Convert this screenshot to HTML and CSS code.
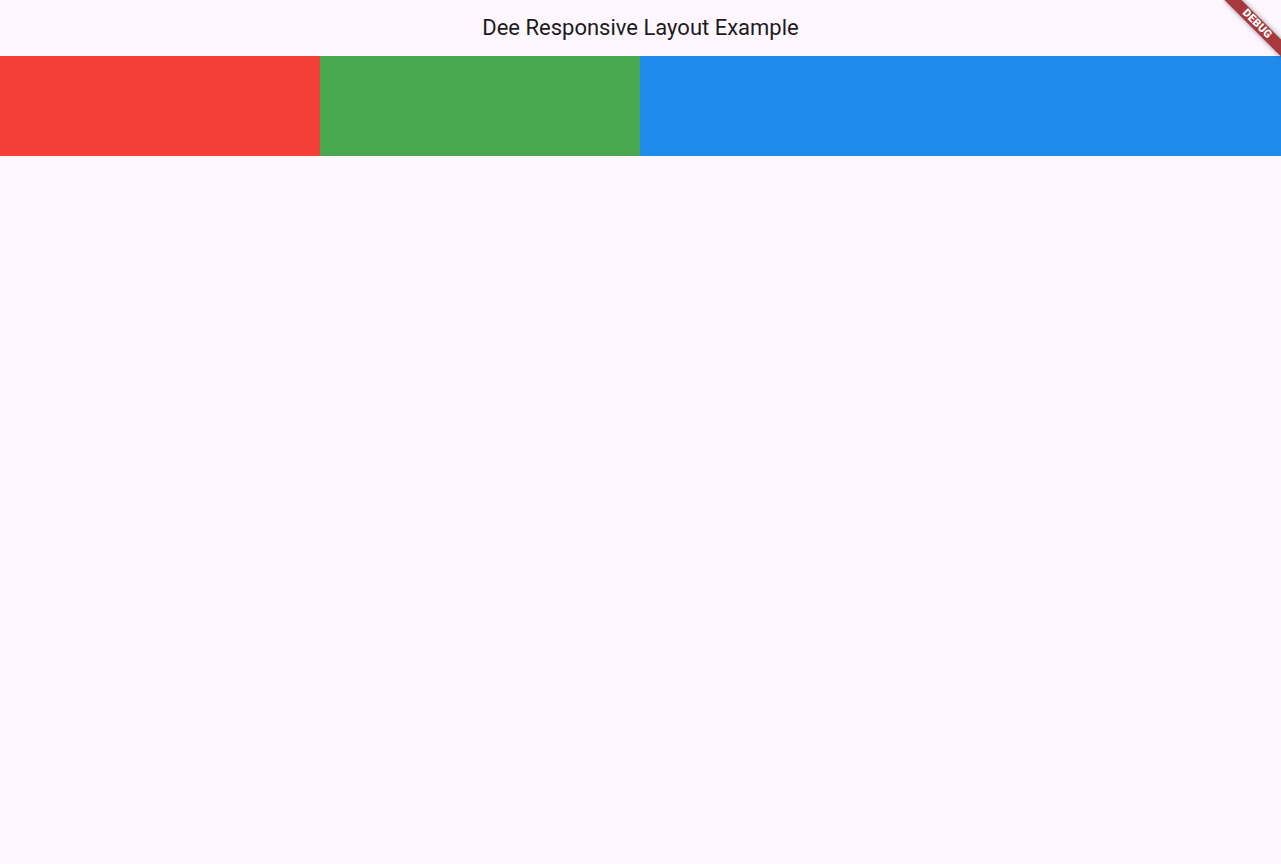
FILE: index.html
```html
<!DOCTYPE html>
<html>
<head>
<meta charset="utf-8">
<link rel="stylesheet" href="styles.css">
</head>
<body>
<div class="app">
  <header class="appbar"><h1 class="title">Dee Responsive Layout Example</h1></header>
  <div class="row">
    <div class="box red"></div>
    <div class="box green"></div>
    <div class="box blue"></div>
  </div>
</div>
<div class="banner">DEBUG</div>
</body>
</html>
```
FILE: styles.css
```css
html, body {
  margin: 0;
  padding: 0;
  background: #fef7ff;
  height: 100%;
  overflow: hidden;
}
.app {
  display: flex;
  flex-direction: column;
  height: 100vh;
  font-family: Roboto, "Noto Sans", sans-serif;
}
.appbar {
  height: 56px;
  display: flex;
  align-items: center;
  justify-content: center;
  background: #fef7ff;
}
.title {
  margin: 0;
  font-size: 22px;
  font-weight: 400;
  color: #1d1b20;
  line-height: 28px;
}
.row {
  display: flex;
  height: 100px;
}
.box { height: 100%; }
.red { background: #f33f38; width: 320px; }
.green { background: #49a84f; width: 320px; }
.blue { background: #218bec; flex: 1; }
.banner {
  position: absolute;
  left: calc(100% - 24px - 40px);
  top: 18px;
  width: 80px;
  height: 12px;
  transform: rotate(45deg);
  background: #a7383c;
  box-shadow: 0 0 5px rgba(0, 0, 0, 0.45);
  color: #fff;
  font-family: Roboto, "Noto Sans", sans-serif;
  font-weight: 900;
  font-size: 11px;
  line-height: 12px;
  letter-spacing: 0.3px;
  text-align: center;
}
```
